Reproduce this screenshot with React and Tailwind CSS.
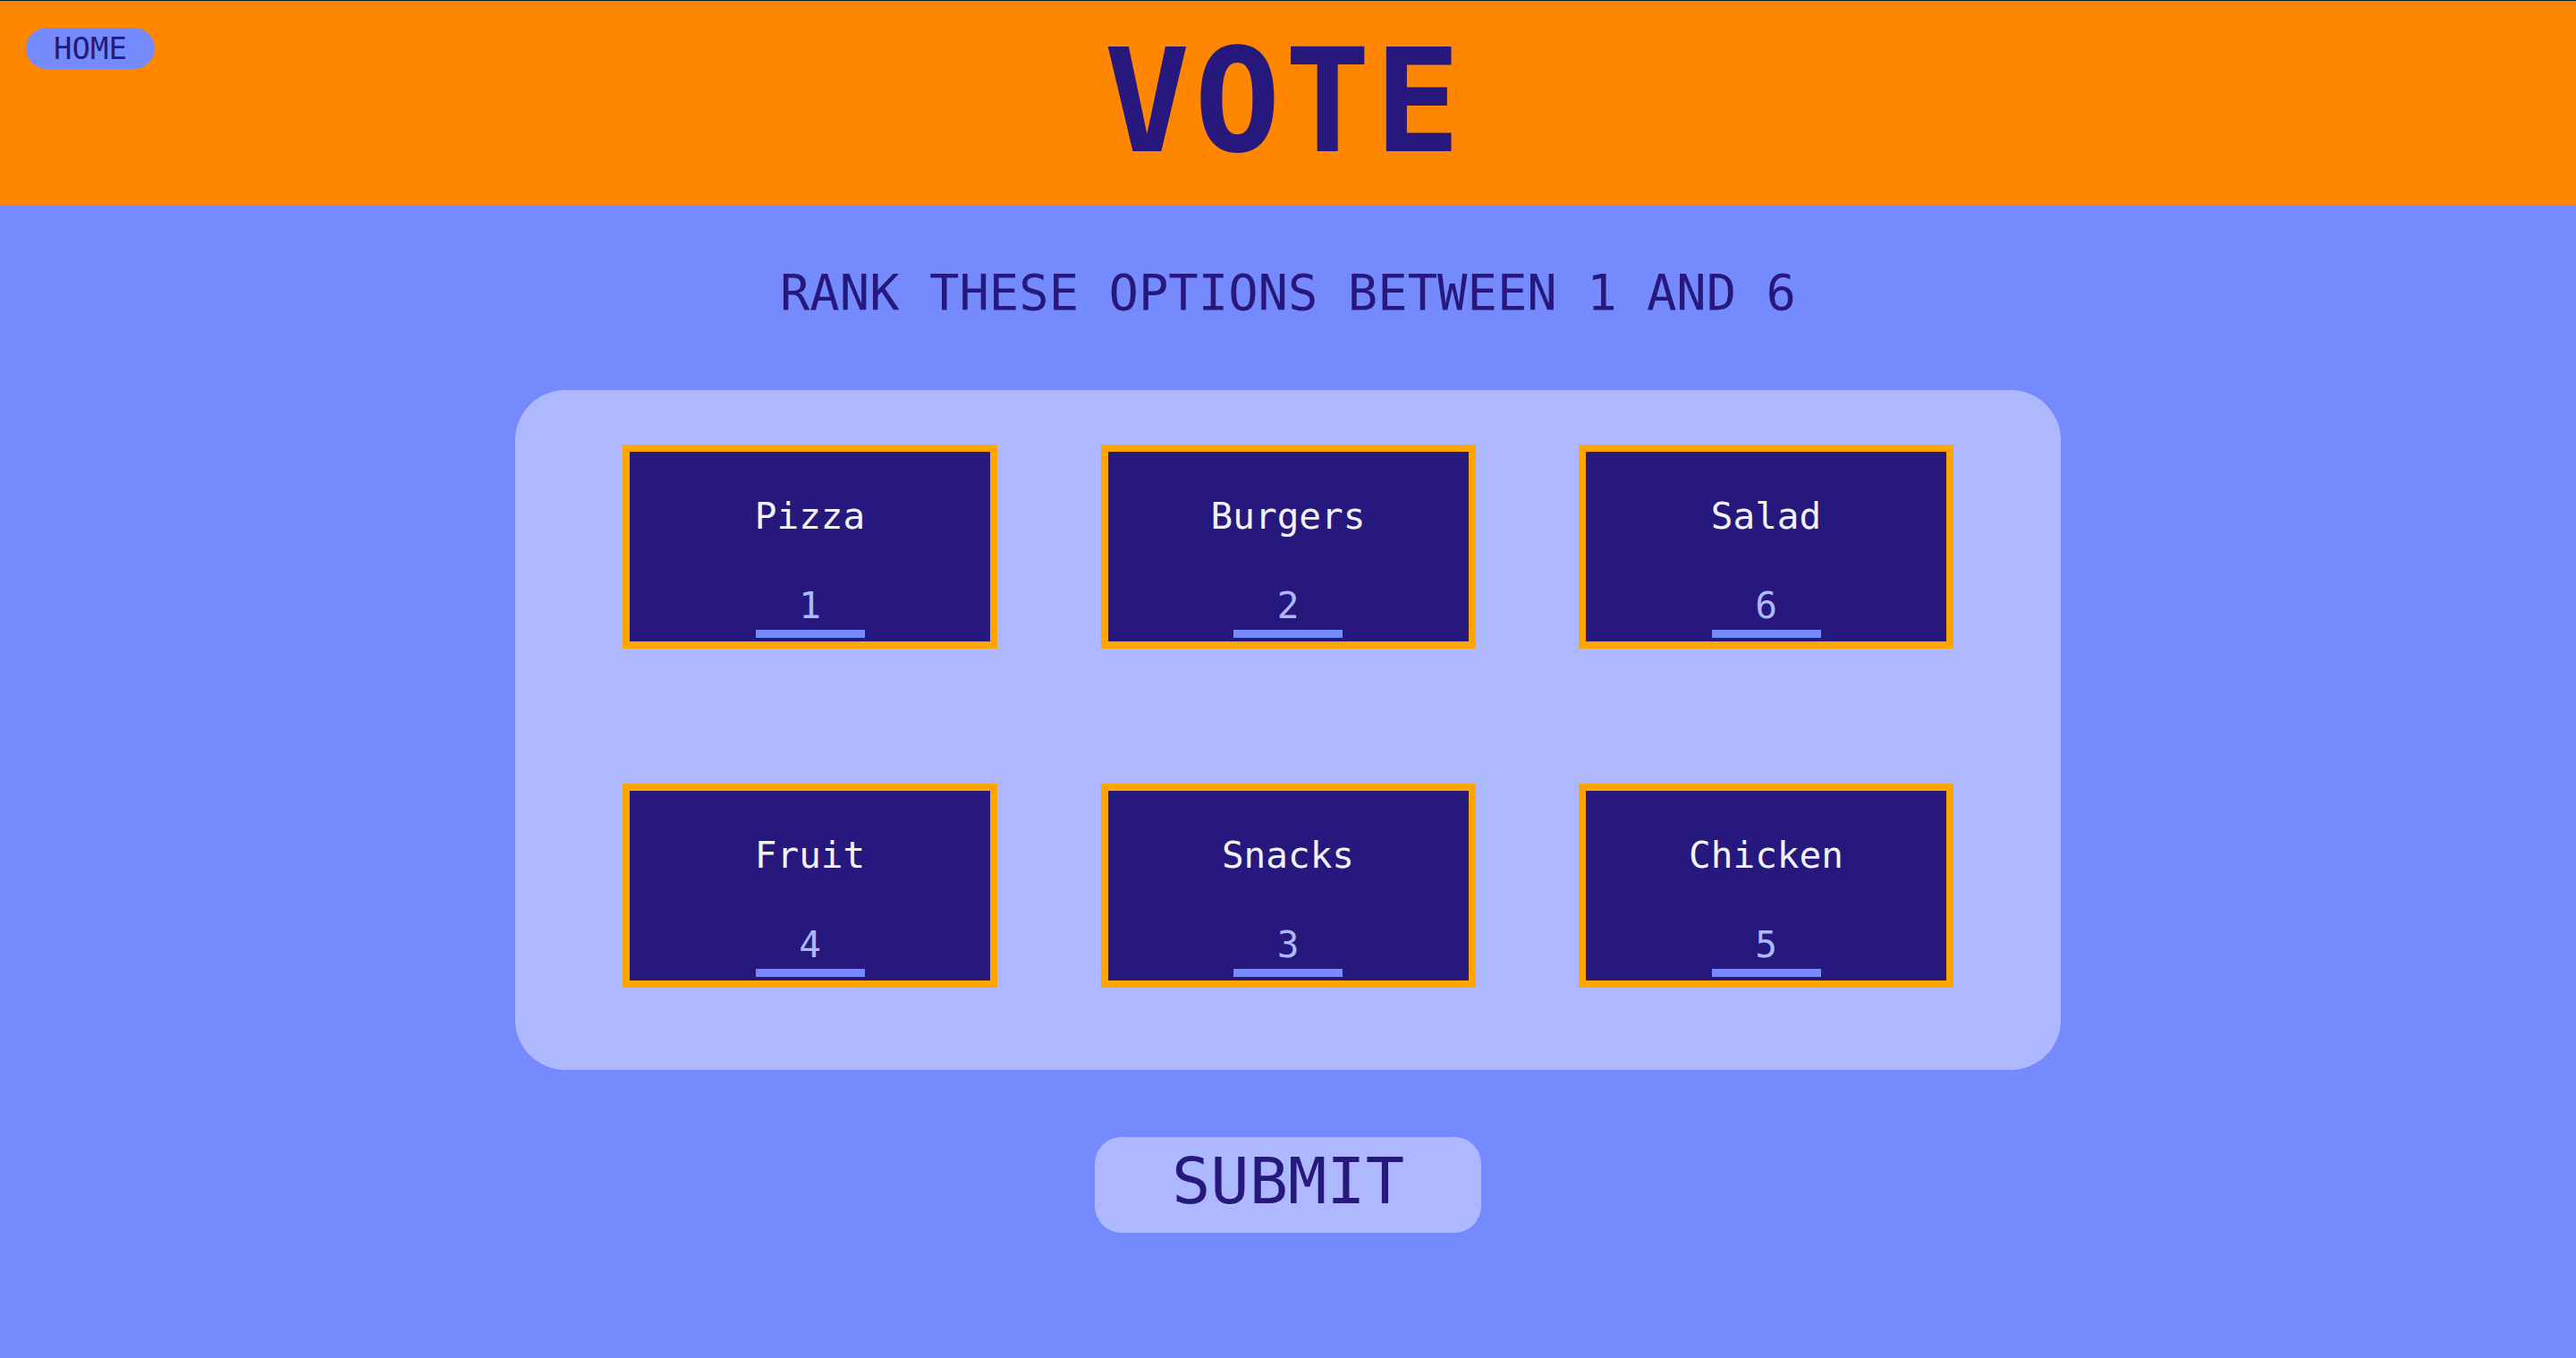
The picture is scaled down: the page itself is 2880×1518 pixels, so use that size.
const options = [
  { name: 'Pizza', rank: 1 },
  { name: 'Burgers', rank: 2 },
  { name: 'Salad', rank: 6 },
  { name: 'Fruit', rank: 4 },
  { name: 'Snacks', rank: 3 },
  { name: 'Chicken', rank: 5 },
]

function OptionCard({ name, rank }) {
  return (
    <div className="flex h-[228px] w-[419px] flex-col items-center border-8 border-[#FFA500] bg-[#27187E] pt-[52px]">
      <div className="text-[41px] leading-none text-[#F1F2F6]">{name}</div>
      <div className="mt-[59px] text-[41px] leading-none text-[#AEB8FE]">{rank}</div>
      <div className="mt-[6px] h-[9px] w-[122px] bg-[#758BFD]" />
    </div>
  )
}

export default function App() {
  return (
    <div className="min-h-screen bg-[#758BFD] font-['DejaVu_Sans_Mono',monospace] text-[#27187E]">
      <header className="grid h-[229px] grid-cols-[1fr_auto_1fr] border-t border-[#0b1a2b] bg-[#FF8600]">
        <button
          type="button"
          className="ml-[29px] mt-[30px] flex h-[46px] w-[144px] items-center justify-center self-start justify-self-start rounded-full bg-[#758BFD] text-[34px] leading-none text-[#27187E]"
        >
          HOME
        </button>
        <h1 className="self-center pb-[3px] pr-[8px] text-[160px] font-bold leading-none tracking-[4.5px]">VOTE</h1>
        <div />
      </header>

      <main className="flex flex-col items-center pb-[140px]">
        <p className="mt-[70px] text-[55.5px] leading-none">RANK THESE OPTIONS BETWEEN 1 AND 6</p>

        <section className="mt-[81px] w-[1728px] rounded-[56px] bg-[#AEB8FE] px-[120px] pb-[92px] pt-[61px]">
          <div className="grid grid-cols-[419px_419px_419px] justify-between gap-y-[151px]">
            {options.map((o) => (
              <OptionCard key={o.name} {...o} />
            ))}
          </div>
        </section>

        <button
          type="button"
          className="mt-[75px] flex h-[107px] w-[432px] items-center justify-center rounded-[30px] bg-[#AEB8FE] pb-[8px] text-[72px] leading-none text-[#27187E]"
        >
          SUBMIT
        </button>
      </main>
    </div>
  )
}
